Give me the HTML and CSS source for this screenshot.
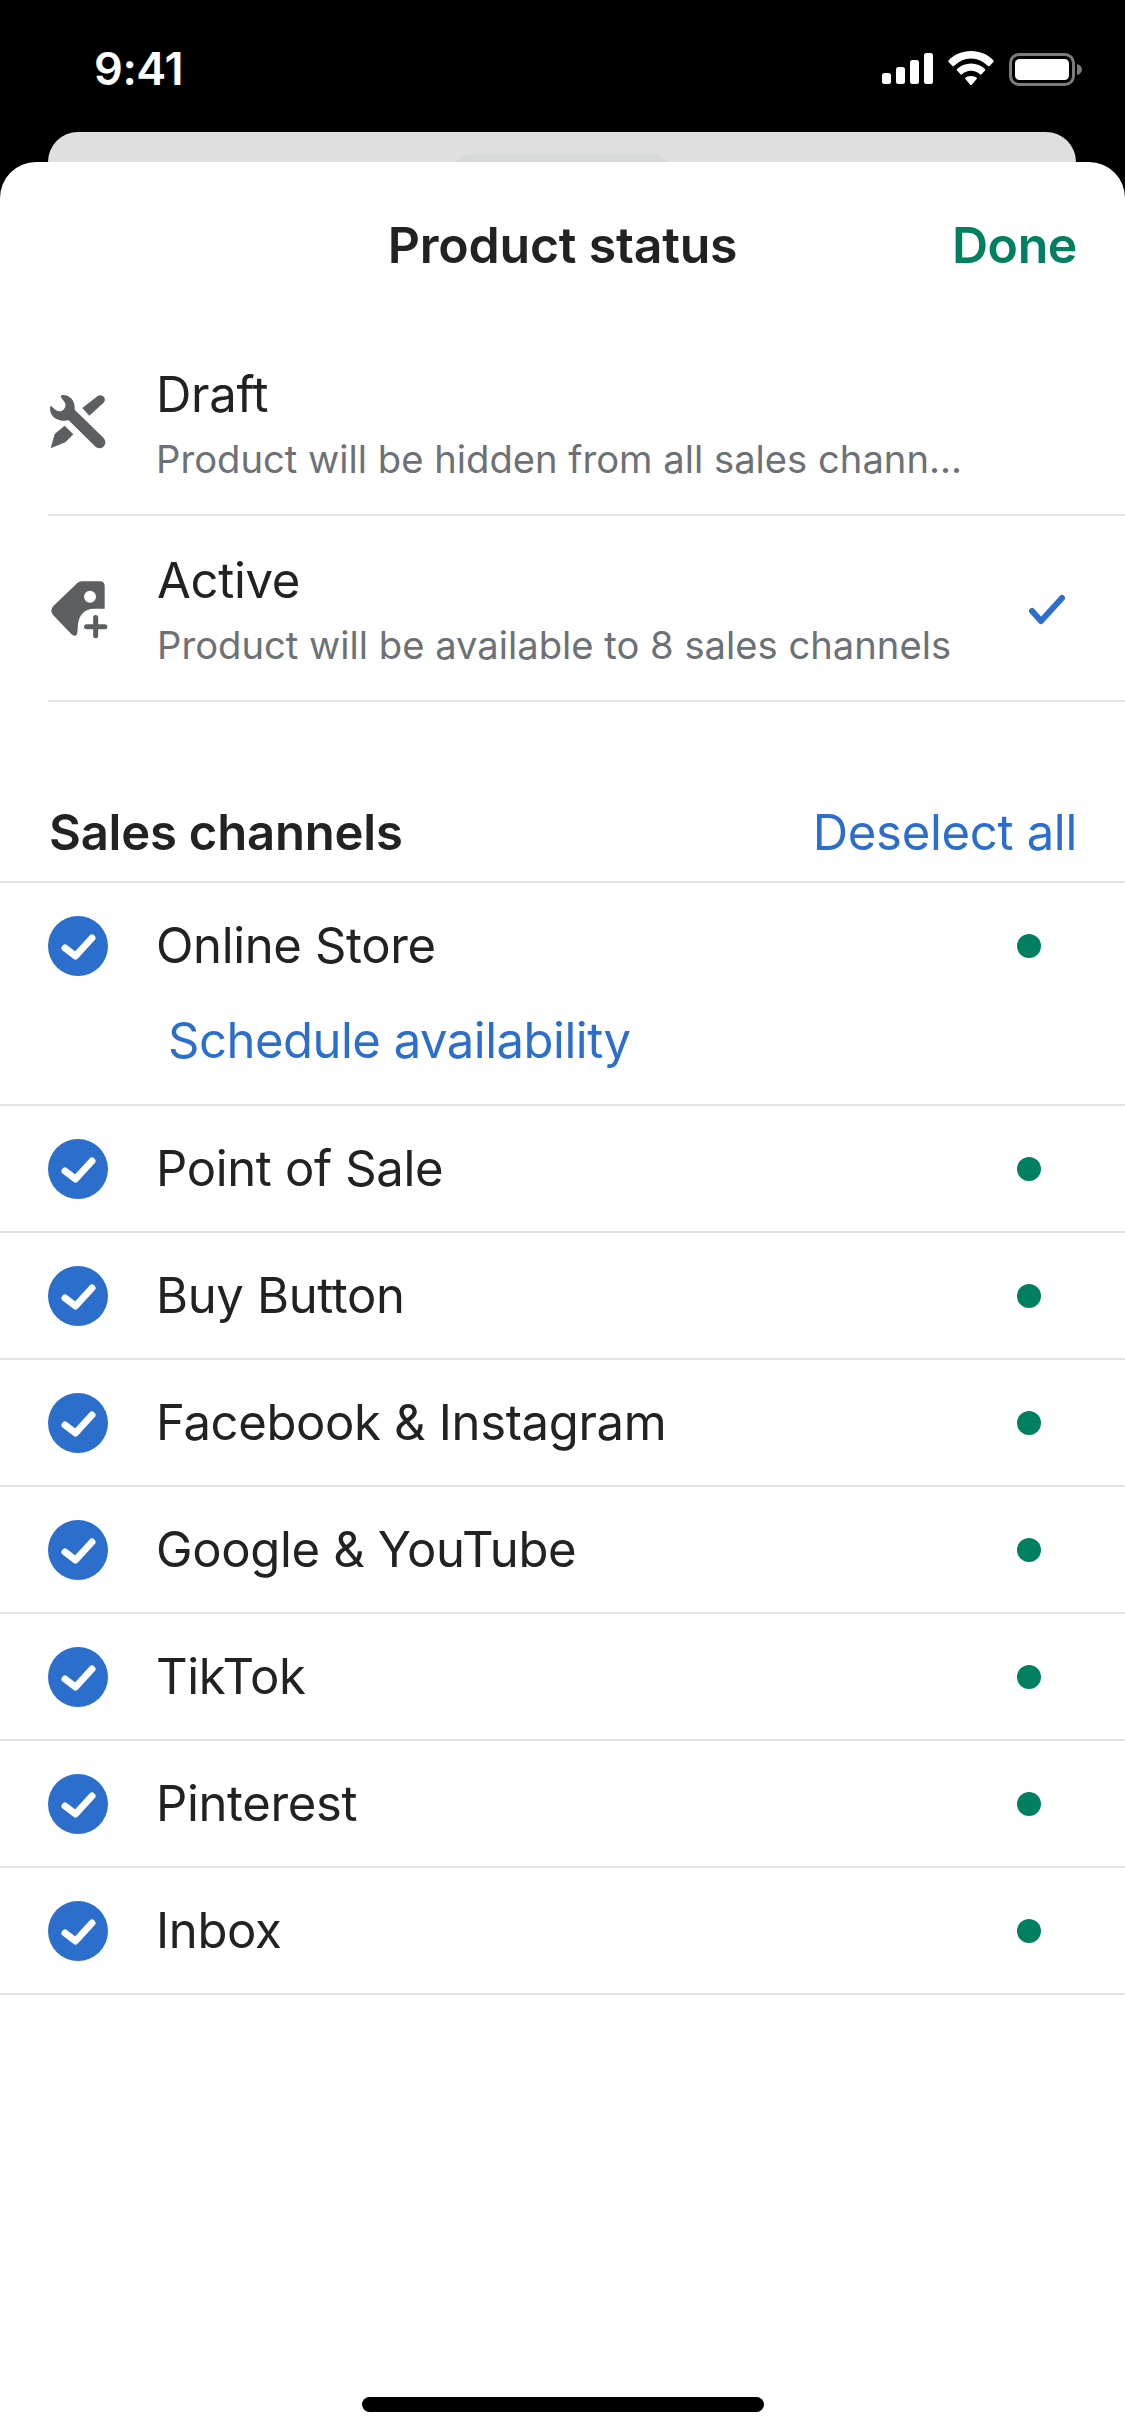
FILE: index.html
```html
<!DOCTYPE html>
<html lang="en">
<head>
<meta charset="utf-8">
<title>Product status</title>
<link rel="stylesheet" href="styles.css">
</head>
<body>
<div class="screen">
  <header class="statusbar">
    <span class="time">9:41</span>
    <div class="status-icons">
      <svg class="signal" viewBox="0 0 51 31"><rect x="0" y="20" width="9" height="11" rx="2.5"/><rect x="14" y="14" width="9" height="17" rx="2.5"/><rect x="28" y="7" width="9" height="24" rx="2.5"/><rect x="42" y="0" width="9" height="31" rx="2.5"/></svg>
      <svg class="wifi" viewBox="0 0 46 34"><path d="M23 0C14 0 6 3.500 .5 9.500Q0 10.500 .8 11.300L4.500 15Q5.300 15.700 6 15C10.500 10.500 16.500 7.500 23 7.500S35.500 10.500 40 15Q40.700 15.700 41.500 15L45.200 11.300Q46 10.500 45.500 9.500C40 3.500 32 0 23 0Z"/><path d="M23 12.500C17.500 12.500 12.500 14.600 9 18Q8.300 18.800 9 19.500L12.500 23.300Q13.300 24 14 23.300C16.400 21 19.500 19.800 23 19.800S29.600 21 32 23.300Q32.700 24 33.500 23.300L37 19.500Q37.700 18.800 37 18C33.500 14.600 28.500 12.500 23 12.500Z"/><path d="M23 25C20.500 25 18.300 25.800 16.800 27.200L22 33.500Q23 34.500 24 33.500L29.200 27.200C27.700 25.800 25.500 25 23 25Z"/></svg>
      <svg class="battery" viewBox="0 0 73 33"><rect x="1.500" y="1.500" width="63" height="30" rx="8.500" class="battery-frame"/><rect x="6" y="6" width="54" height="21" rx="4.500"/><path d="M68 11c3 .8 5 3 5 5.500s-2 4.700-5 5.500Z" class="battery-nub"/></svg>
    </div>
  </header>

  <div class="back-card"><div class="back-handle"></div></div>

  <main class="sheet">
    <div class="nav">
      <h1 class="nav-title">Product status</h1>
      <span class="done">Done</span>
    </div>

    <section class="status-list">
      <div class="status-row">
        <svg class="status-icon" viewBox="0 0 204 198"><path d="M18 56C18 52 21 50 24 53L36 64C42 68 52 68 58 62 66 55 66 46 62 40L52 26C49 22 51 18 56 18 76 17 94 35 92 58L92 62 178 146C186 155 186 166 178 173 170 180 160 179 153 172L74 94C50 100 16 88 18 56Z"/><path d="M115 57 160 22Q172 14 180 24 186 34 178 42L136 80Z"/><path d="M20 178 32 135 62 110 88 136 64 160Z"/></svg>
        <div class="status-text status-text-draft">
          <div class="status-name">Draft</div>
          <div class="status-desc">Product will be hidden from all sales chann...</div>
        </div>
      </div>
      <div class="status-row">
        <svg class="status-icon status-icon-tag" viewBox="0 0 204 198"><path fill-rule="evenodd" d="M100 21Q105 16 112 16H168Q182 16 182 30V98H150C122 98 104 118 102 145L100 170Q98 184 84 176L28 118Q16 104 28 90ZM156 62A18 18 0 1 0 120 62 18 18 0 1 0 156 62Z"/><rect x="120" y="144.500" width="70" height="15" rx="7.500"/><rect x="147.500" y="117" width="15" height="70" rx="7.500"/></svg>
        <div class="status-text">
          <div class="status-name">Active</div>
          <div class="status-desc">Product will be available to 8 sales channels</div>
        </div>
        <svg class="status-check" viewBox="0 0 36 32"><path d="M3 17 12 27 33 4"/></svg>
      </div>
    </section>

    <div class="channels-head">
      <h2 class="channels-title">Sales channels</h2>
      <span class="deselect">Deselect all</span>
    </div>

    <section class="channels">
      <div class="channel channel-open">
        <div class="channel-main">
          <svg class="tick" viewBox="0 0 60 60"><circle cx="30" cy="30" r="30"/><path d="M17 32 27.500 40 44 22"/></svg>
          <span class="channel-name">Online Store</span>
          <span class="dot"></span>
        </div>
        <div class="schedule">Schedule availability</div>
      </div>
      <div class="channel"><div class="channel-main"><svg class="tick" viewBox="0 0 60 60"><circle cx="30" cy="30" r="30"/><path d="M17 32 27.500 40 44 22"/></svg><span class="channel-name">Point of Sale</span><span class="dot"></span></div></div>
      <div class="channel"><div class="channel-main"><svg class="tick" viewBox="0 0 60 60"><circle cx="30" cy="30" r="30"/><path d="M17 32 27.500 40 44 22"/></svg><span class="channel-name">Buy Button</span><span class="dot"></span></div></div>
      <div class="channel"><div class="channel-main"><svg class="tick" viewBox="0 0 60 60"><circle cx="30" cy="30" r="30"/><path d="M17 32 27.500 40 44 22"/></svg><span class="channel-name">Facebook &amp; Instagram</span><span class="dot"></span></div></div>
      <div class="channel"><div class="channel-main"><svg class="tick" viewBox="0 0 60 60"><circle cx="30" cy="30" r="30"/><path d="M17 32 27.500 40 44 22"/></svg><span class="channel-name">Google &amp; YouTube</span><span class="dot"></span></div></div>
      <div class="channel"><div class="channel-main"><svg class="tick" viewBox="0 0 60 60"><circle cx="30" cy="30" r="30"/><path d="M17 32 27.500 40 44 22"/></svg><span class="channel-name">TikTok</span><span class="dot"></span></div></div>
      <div class="channel"><div class="channel-main"><svg class="tick" viewBox="0 0 60 60"><circle cx="30" cy="30" r="30"/><path d="M17 32 27.500 40 44 22"/></svg><span class="channel-name">Pinterest</span><span class="dot"></span></div></div>
      <div class="channel"><div class="channel-main"><svg class="tick" viewBox="0 0 60 60"><circle cx="30" cy="30" r="30"/><path d="M17 32 27.500 40 44 22"/></svg><span class="channel-name">Inbox</span><span class="dot"></span></div></div>
    </section>

    <div class="home-area"><div class="home-indicator"></div></div>
  </main>
</div>
</body>
</html>
```
FILE: styles.css
```css
* { box-sizing: border-box; }
html, body { margin: 0; padding: 0; background: #000; }
body { font-family: Inter, "Liberation Sans", sans-serif; color: #202223; }
.screen { width: 1125px; height: 2436px; background: #000; display: flex; flex-direction: column; overflow: hidden; }

.statusbar { height: 132px; flex: none; display: flex; justify-content: space-between; align-items: flex-start; padding: 46px 43px 0 94px; color: #fff; }
.time { font-size: 45px; line-height: 46px; font-weight: 600; letter-spacing: -0.4px; }
.status-icons { display: flex; align-items: flex-start; gap: 15px; padding-top: 7px; }
.signal { width: 51px; height: 31px; fill: #fff; }
.wifi { width: 46px; height: 34px; fill: #fff; margin-top: -2px; }
.battery { width: 73px; height: 33px; fill: #fff; }
.battery-frame { fill: none; stroke: #7c7c7c; stroke-width: 3; }
.battery-nub { fill: #7c7c7c; }

.back-card { height: 30px; flex: none; margin: 0 49px 0 48px; background: #dfdfdf; border-radius: 36px 36px 0 0; display: flex; justify-content: center; padding-top: 22px; overflow: hidden; }
.back-handle { width: 220px; height: 20px; background: #d6dbd9; border-radius: 20px 20px 0 0; }

.sheet { flex: 1; background: #fff; border-radius: 36px 36px 0 0; display: flex; flex-direction: column; }

.nav { height: 168px; flex: none; position: relative; display: flex; justify-content: center; align-items: flex-start; padding-top: 53px; }
.nav-title { margin: 0; font-size: 50px; line-height: 60px; font-weight: 600; letter-spacing: -0.2px; }
.done { position: absolute; right: 48px; top: 53px; font-size: 50px; line-height: 60px; font-weight: 600; color: #008060; letter-spacing: -0.4px; }

.status-list { margin-left: 48px; }
.status-row { height: 186px; border-bottom: 2px solid #e1e3e5; display: flex; align-items: center; padding-right: 58px; }
.status-icon { width: 68px; height: 66px; fill: #5c5f62; flex: none; margin: 0 45px 0 -4px; }
.status-icon-tag { margin: 2px 45px 0 -4px; }
.status-text { flex: 1; min-width: 0; padding-top: 2px; }
.status-text-draft { margin-left: -1px; }
.status-name { font-size: 49px; line-height: 60px; letter-spacing: -0.3px; }
.status-desc { font-size: 38.200px; line-height: 46px; color: #6d7175; margin-top: 11px; white-space: nowrap; }
.status-check { width: 36px; height: 32px; fill: none; stroke: #2c6ecb; stroke-width: 6; stroke-linecap: round; stroke-linejoin: round; flex: none; margin: 4px 2px 0 0; }

.channels-head { height: 181px; flex: none; display: flex; justify-content: space-between; align-items: flex-end; padding: 0 48px 18px 49px; border-bottom: 2px solid #e1e3e5; }
.channels-title { margin: 0; font-size: 49px; line-height: 60px; font-weight: 600; letter-spacing: -0.2px; }
.deselect { font-size: 49px; line-height: 60px; color: #2c6ecb; letter-spacing: -0.3px; }

.channel { height: 127px; border-bottom: 2px solid #e1e3e5; padding: 33px 0 0 48px; }
.channel-open { height: 223px; }
.channel-main { display: flex; align-items: center; height: 60px; padding-right: 84px; }
.tick { width: 60px; height: 60px; flex: none; margin-right: 48px; }
.tick circle { fill: #2c6ecb; }
.tick path { fill: none; stroke: #fff; stroke-width: 7; stroke-linecap: round; stroke-linejoin: round; }
.channel-name { flex: 1; font-size: 49px; line-height: 60px; letter-spacing: -0.35px; }
.dot { width: 24px; height: 24px; border-radius: 50%; background: #008060; flex: none; }
.schedule { margin: 35px 0 0 120px; font-size: 49px; line-height: 60px; color: #2c6ecb; letter-spacing: -0.5px; }

.home-area { flex: 1; display: flex; align-items: flex-end; justify-content: center; padding-bottom: 24px; }
.home-indicator { width: 402px; height: 15px; border-radius: 8px; background: #000; }
```
